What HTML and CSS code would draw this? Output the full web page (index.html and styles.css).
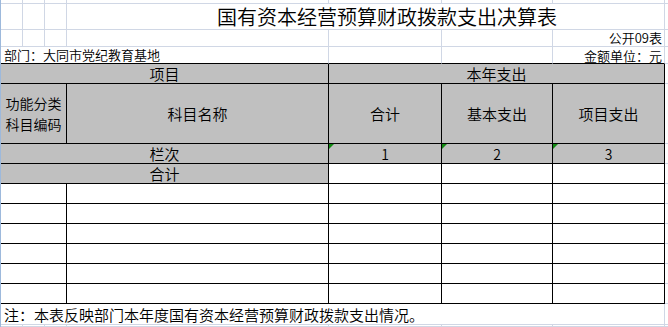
FILE: index.html
```html
<!DOCTYPE html>
<html lang="zh-CN">
<head>
<meta charset="utf-8">
<title>国有资本经营预算财政拨款支出决算表</title>
<link rel="stylesheet" href="styles.css">
</head>
<body>
<div class="sheet">
  <!-- row 0: partial top row -->
  <div class="c"></div><div class="c"></div><div class="c"></div><div class="c"></div><div class="c"></div><div class="c"></div><div class="c"></div><div class="c edge"></div>

  <!-- row 1: title -->
  <div class="c"></div><div class="c"></div><div class="c"></div>
  <div class="c title span-dg">国有资本经营预算财政拨款支出决算表</div>
  <div class="c edge"></div>

  <!-- row 2 -->
  <div class="c"></div><div class="c"></div><div class="c"></div><div class="c"></div><div class="c"></div><div class="c"></div>
  <div class="c small right up">公开09表</div>
  <div class="c edge"></div>

  <!-- row 3 -->
  <div class="c small left span-ad tb">部门：大同市党纪教育基地</div>
  <div class="c tb"></div><div class="c tb"></div>
  <div class="c small right tb down">金额单位：元</div>
  <div class="c edge"></div>

  <!-- table header row 1 -->
  <div class="c t gray head span-ad">项目</div>
  <div class="c t gray head span-eg">本年支出</div>
  <div class="c edge"></div>

  <!-- table header row 2 -->
  <div class="c t gray head span-ac two"><span class="ln">功能分类</span><span class="ln">科目编码</span></div>
  <div class="c t gray head">科目名称</div>
  <div class="c t gray head">合计</div>
  <div class="c t gray head">基本支出</div>
  <div class="c t gray head">项目支出</div>
  <div class="c edge"></div>

  <!-- 栏次 -->
  <div class="c t gray head span-ad">栏次</div>
  <div class="c t gray num flag">1</div>
  <div class="c t gray num flag">2</div>
  <div class="c t gray num flag">3</div>
  <div class="c edge"></div>

  <!-- 合计 -->
  <div class="c t gray head span-ad">合计</div>
  <div class="c t"></div><div class="c t"></div><div class="c t"></div>
  <div class="c edge"></div>

  <!-- data rows -->
  <div class="c t span-ac"></div><div class="c t"></div><div class="c t"></div><div class="c t"></div><div class="c t"></div><div class="c edge"></div>
  <div class="c t span-ac"></div><div class="c t"></div><div class="c t"></div><div class="c t"></div><div class="c t"></div><div class="c edge"></div>
  <div class="c t span-ac"></div><div class="c t"></div><div class="c t"></div><div class="c t"></div><div class="c t"></div><div class="c edge"></div>
  <div class="c t span-ac"></div><div class="c t"></div><div class="c t"></div><div class="c t"></div><div class="c t"></div><div class="c edge"></div>
  <div class="c t span-ac"></div><div class="c t"></div><div class="c t"></div><div class="c t"></div><div class="c t"></div><div class="c edge"></div>
  <div class="c t span-ac"></div><div class="c t"></div><div class="c t"></div><div class="c t"></div><div class="c t"></div><div class="c edge"></div>

  <!-- note -->
  <div class="c note span-ag">注：本表反映部门本年度国有资本经营预算财政拨款支出情况。</div>
  <div class="c edge"></div>

  <!-- partial bottom row -->
  <div class="c"></div><div class="c"></div><div class="c"></div><div class="c"></div><div class="c"></div><div class="c"></div><div class="c"></div><div class="c edge"></div>
</div>
</body>
</html>
```

FILE: styles.css
```css
html, body {
  margin: 0;
  padding: 0;
  background: #ffffff;
}

body {
  width: 668px;
  height: 327px;
  overflow: hidden;
  font-family: "Noto Sans CJK SC", "Noto Sans", sans-serif;
  font-weight: 350;
  color: #000;
}

.sheet {
  box-sizing: border-box;
  width: 668px;
  height: 327px;
  border-left: 1px solid #9db9dc;
  display: grid;
  grid-template-columns: 22px 22px 22px 262px 113px 111px 112px 1fr;
  grid-template-rows: 4px 26px 17px 17px 20px 60px 20px 20px repeat(6, 20px) 21px 1fr;
  background: #fff;
}

.c {
  box-sizing: border-box;
  border-right: 1px solid #d0d7e5;
  border-bottom: 1px solid #d0d7e5;
  min-width: 0;
  min-height: 0;
  white-space: nowrap;
  overflow: visible;
}

.edge {
  border-right: none;
}

.t {
  border-right-color: #000;
  border-bottom-color: #000;
}

.tb {
  border-bottom-color: #000;
}

.gray {
  background: #c0c0c0;
}

.span-ac { grid-column: 1 / 4; }
.span-ad { grid-column: 1 / 5; }
.span-dg { grid-column: 4 / 8; }
.span-eg { grid-column: 5 / 8; }
.span-ag { grid-column: 1 / 8; }

.title {
  font-size: 20px;
  line-height: 24px;
  display: flex;
  align-items: flex-end;
  padding-left: 150px;
}

.small {
  font-size: 13px;
  line-height: 16px;
  display: flex;
  align-items: flex-end;
}

.up {
  align-items: flex-start;
}

.down {
  align-items: flex-start;
  padding-top: 1px;
}

.left {
  justify-content: flex-start;
  padding-left: 3px;
}

.right {
  justify-content: flex-end;
  padding-right: 2px;
}

.head {
  font-size: 15px;
  line-height: 17px;
  display: flex;
  align-items: center;
  justify-content: center;
  text-align: center;
}

.two {
  flex-direction: column;
  font-size: 14px;
}

.ln {
  display: block;
  line-height: 21px;
}

.num {
  font-size: 14px;
  line-height: 18px;
  display: flex;
  align-items: flex-end;
  justify-content: center;
  position: relative;
}

.flag::before {
  content: "";
  position: absolute;
  top: 0;
  left: 0;
  width: 0;
  height: 0;
  border-top: 5px solid #138a13;
  border-right: 5px solid transparent;
}

.note {
  font-size: 15px;
  line-height: 18px;
  display: flex;
  align-items: flex-end;
  padding-left: 3px;
}
```
